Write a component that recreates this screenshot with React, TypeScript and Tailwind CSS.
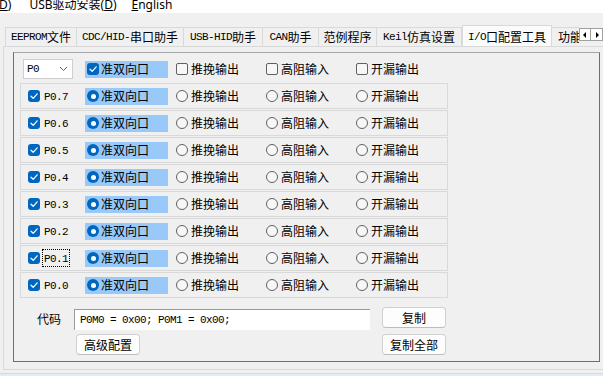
import React from "react";

const CJK = "font-['Noto_Sans_CJK_SC',sans-serif]";

function Mix({ text }: { text: string }) {
  const parts = text.split(/([\x20-\x7E]+)/).filter(Boolean);
  return (
    <>
      {parts.map((p, i) =>
        /^[\x20-\x7E]+$/.test(p) ? (
          <span
            key={i}
            className="font-['Liberation_Mono',monospace] text-[11px] tracking-[-0.6px] whitespace-pre"
          >
            {p}
          </span>
        ) : (
          <span key={i} className="font-['Noto_Sans_CJK_SC',sans-serif] text-[12px]">
            {p}
          </span>
        )
      )}
    </>
  );
}

function Check({ checked }: { checked?: boolean }) {
  return checked ? (
    <span className="w-[12px] h-[12px] rounded-[3px] bg-[#0067c0] flex items-center justify-center shrink-0">
      <svg width="10" height="10" viewBox="0 0 10 10">
        <path
          d="M2 5.2 L4.2 7.3 L8.2 2.8"
          fill="none"
          stroke="white"
          strokeWidth="1.2"
          strokeLinecap="round"
          strokeLinejoin="round"
        />
      </svg>
    </span>
  ) : (
    <span className="w-[12px] h-[12px] rounded-[2px] border border-[#616161] bg-[#f7f7f7] shrink-0" />
  );
}

function Radio({ on }: { on?: boolean }) {
  return on ? (
    <span className="w-[12px] h-[12px] rounded-full bg-[#0067c0] flex items-center justify-center shrink-0">
      <span className="w-[5px] h-[5px] rounded-full bg-white" />
    </span>
  ) : (
    <span className="w-[12px] h-[12px] rounded-full border border-[#616161] bg-[#f7f7f7] shrink-0" />
  );
}

const tabs: { label: string; w: string; sel?: boolean }[] = [
  { label: "EEPROM文件", w: "w-[72px]" },
  { label: "CDC/HID-串口助手", w: "w-[107px]" },
  { label: "USB-HID助手", w: "w-[79px]" },
  { label: "CAN助手", w: "w-[56px]" },
  { label: "范例程序", w: "w-[58px]" },
  { label: "Keil仿真设置", w: "w-[85px]" },
  { label: "I/O口配置工具", w: "w-[90px]", sel: true },
];

const pins = ["P0.7", "P0.6", "P0.5", "P0.4", "P0.3", "P0.2", "P0.1", "P0.0"];

function Btn({ label }: { label: string }) {
  return (
    <div
      className={`w-[64px] h-[21px] bg-[#fdfdfd] border border-[#d0d0d0] border-b-[#bdbdbd] rounded-[4px] flex items-center justify-center text-[12px] leading-[16px] text-black ${CJK}`}
    >
      {label}
    </div>
  );
}

export default function App() {
  return (
    <div className="w-[603px] h-[376px] bg-[#f0f0f0] overflow-hidden text-black">
      {/* menu bar */}
      <div className="h-[13px] bg-white overflow-hidden">
        <div className={`flex -mt-[3px] text-[12px] leading-[16px] font-['Noto_Sans','Noto_Sans_CJK_SC',sans-serif]`}>
          <span className="ml-[-1px]">
            <span className="underline">D</span>)
          </span>
          <span className="ml-[18px]">
            USB驱动安装(<span className="underline">D</span>)
          </span>
          <span className="ml-[15px]">
            <span className="underline">E</span>nglish
          </span>
        </div>
      </div>

      {/* tab strip */}
      <div className="mt-[12px] h-[21px] flex items-end">
        <div className="ml-[5px] w-[574px] shrink-0 h-[22px] flex items-end overflow-hidden">
          {tabs.map((t) => (
            <div
              key={t.label}
              className={
                t.sel
                  ? `${t.w} shrink-0 h-[22px] -mb-px bg-[#fbfbfb] border border-b-0 border-[#d9d9d9] flex items-center justify-center leading-[16px] relative z-10`
                  : `${t.w} shrink-0 h-[19px] border-t border-r border-[#d9d9d9] first:border-l flex items-center justify-center leading-[16px]`
              }
            >
              <Mix text={t.label} />
            </div>
          ))}
          <div className="w-[60px] shrink-0 h-[19px] border-t border-[#d9d9d9] flex items-center pl-[6px] leading-[16px]">
            <Mix text="功能脚" />
          </div>
        </div>
        <div className="flex shrink-0 mb-[5px]">
          <div className="w-[12px] h-[13px] bg-white border border-[#a0a0a0] flex items-center justify-center">
            <svg width="4" height="6" viewBox="0 0 4 6">
              <path d="M3 0 L0 3 L3 6 Z" fill="#000" />
            </svg>
          </div>
          <div className="w-[12px] h-[13px] bg-white border border-l-0 border-[#a0a0a0] flex items-center justify-center">
            <svg width="4" height="6" viewBox="0 0 4 6">
              <path d="M1 0 L4 3 L1 6 Z" fill="#000" />
            </svg>
          </div>
        </div>
      </div>

      {/* tab panel */}
      <div className="ml-[3px] w-[600px] h-[324px] border border-[#d9d9d9] border-r-0 bg-[#f0f0f0] pt-[5px]">
        <div className="ml-[9px] w-[587px] h-[310px] border border-[#6f6f6f] border-t-[#a6a6a6] pt-[6px]">
          {/* header row */}
          <div className="flex items-center h-[20px]">
            <div className="ml-[9px] w-[50px] h-[20px] bg-white border border-[#cfcfcf] flex items-center justify-between pl-[3px] pr-[4px] leading-[16px]">
              <Mix text="P0" />
              <svg width="9" height="6" viewBox="0 0 9 6">
                <path d="M1 1 L4.5 4.5 L8 1" fill="none" stroke="#606060" strokeWidth="1" />
              </svg>
            </div>
            <div className="ml-[12px] w-[83px] h-[17px] bg-[#99c9f9] flex items-center pl-[2px] gap-[2px]">
              <Check checked />
              <span className={`${CJK} text-[12px] leading-[16px]`}>准双向口</span>
            </div>
            {["推挽输出", "高阻输入", "开漏输出"].map((l, i) => (
              <div key={l} className={`${i === 0 ? "ml-[8px]" : ""} w-[90px] flex items-center gap-[3px]`}>
                <Check />
                <span className={`${CJK} text-[12px] leading-[16px]`}>{l}</span>
              </div>
            ))}
          </div>

          {/* pin rows */}
          <div className="mt-[4px] flex flex-col">
            {pins.map((p) => (
              <div
                key={p}
                className="ml-[6px] w-[428px] h-[26px] mb-[1px] border border-[#d9d9d9] flex items-center"
              >
                <div className="w-[64px] flex items-center pl-[7px] gap-[2px]">
                  <Check checked />
                  <span
                    className={`leading-[13px] px-[1px] border border-dotted ${
                      p === "P0.1" ? "border-black" : "border-transparent"
                    }`}
                  >
                    <Mix text={p} />
                  </span>
                </div>
                <div className="w-[83px] h-[17px] bg-[#99c9f9] flex items-center pl-[2px] gap-[2px]">
                  <Radio on />
                  <span className={`${CJK} text-[12px] leading-[16px]`}>准双向口</span>
                </div>
                {["推挽输出", "高阻输入", "开漏输出"].map((l, i) => (
                  <div key={l} className={`${i === 0 ? "ml-[8px]" : ""} w-[90px] flex items-center gap-[3px]`}>
                    <Radio />
                    <span className={`${CJK} text-[12px] leading-[16px]`}>{l}</span>
                  </div>
                ))}
              </div>
            ))}
          </div>

          {/* code row */}
          <div className="mt-[8px] h-[23px] flex items-start">
            <span className={`ml-[23px] mt-[4px] w-[24px] ${CJK} text-[12px] leading-[16px]`}>代码</span>
            <div className="ml-[13px] mt-[2px] w-[296px] h-[21px] bg-white border-t border-l border-[#9a9a9a] flex items-center pl-[5px] leading-[16px]">
              <Mix text="P0M0 = 0x00; P0M1 = 0x00;" />
            </div>
            <div className="ml-[12px]">
              <Btn label="复制" />
            </div>
          </div>
          <div className="mt-[4px] flex">
            <div className="ml-[62px]">
              <Btn label="高级配置" />
            </div>
            <div className="ml-[242px]">
              <Btn label="复制全部" />
            </div>
          </div>
        </div>
      </div>

      {/* status strip */}
      <div className="mt-[3px] h-[4px] bg-[#e1ecf7] border-t border-[#c9dcee]" />
    </div>
  );
}
